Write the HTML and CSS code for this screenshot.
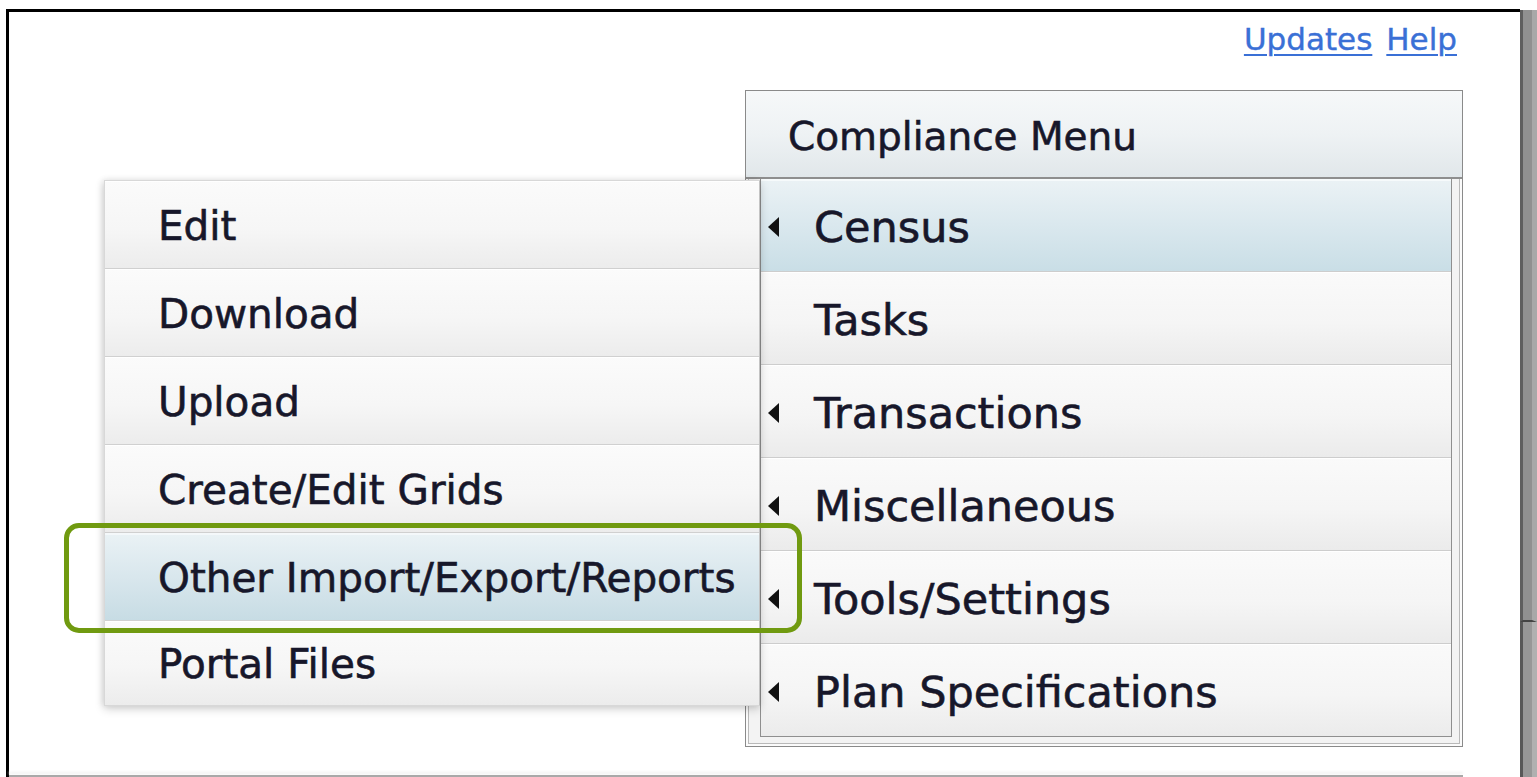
FILE: index.html
```html
<!DOCTYPE html>
<html lang="en">
<head>
<meta charset="utf-8">
<title>Compliance Menu</title>
<link rel="stylesheet" href="styles.css">
</head>
<body>
<div class="window">
  <main class="page">
    <nav class="toplinks">
      <a href="#">Updates</a>
      <a href="#">Help</a>
    </nav>

    <section class="cmenu">
      <header class="cmenu-title">Compliance Menu</header>
      <ul class="cmenu-list">
        <li class="cmenu-item is-active"><span class="arrow"></span><span class="label">Census</span></li>
        <li class="cmenu-item"><span class="noarrow"></span><span class="label">Tasks</span></li>
        <li class="cmenu-item"><span class="arrow"></span><span class="label">Transactions</span></li>
        <li class="cmenu-item"><span class="arrow"></span><span class="label">Miscellaneous</span></li>
        <li class="cmenu-item"><span class="arrow"></span><span class="label">Tools/Settings</span></li>
        <li class="cmenu-item"><span class="arrow"></span><span class="label">Plan Specifications</span></li>
      </ul>
    </section>

    <div class="page-rule"></div>

    <!-- Census submenu, opened to the left of the main menu -->
    <ul class="flyout">
      <li class="flyout-item">Edit</li>
      <li class="flyout-item">Download</li>
      <li class="flyout-item">Upload</li>
      <li class="flyout-item">Create/Edit Grids</li>
      <li class="flyout-item is-active">Other Import/Export/Reports</li>
      <li class="flyout-item">Portal Files</li>
    </ul>

    <!-- callout ring around the selected entry -->
    <div class="callout"></div>
  </main>
  <div class="scrollbar">
    <div class="scrollbar-thumb"></div>
    <div class="scrollbar-track"></div>
  </div>
</div>
</body>
</html>
```

FILE: styles.css
```css
* {
  box-sizing: border-box;
}

html,
body {
  margin: 0;
  padding: 0;
  background: #fff;
}

body {
  width: 1537px;
  height: 777px;
  overflow: hidden;
  font-family: "DejaVu Sans", Verdana, sans-serif;
  color: #17172a;
}

.window {
  display: flex;
  align-items: flex-start;
  width: 1537px;
  height: 777px;
  padding: 9px 0 0 6px;
}

/* page frame with the heavy top/left edge */
.page {
  position: relative;
  flex: 0 0 1514px;
  height: 768px;
  display: flex;
  flex-direction: column;
  border-top: 3px solid #000;
  border-left: 3px solid #000;
  background: #fff;
}

/* window scrollbar on the right edge */
.scrollbar {
  flex: 0 0 17px;
  height: 767px;
  margin-top: 1px;
  display: flex;
  flex-direction: column;
  background: #8c8c8c;
}

.scrollbar-thumb {
  height: 612px;
  background: #909090;
  border-left: 3px solid #5e5e5e;
  border-right: 5px solid #a8a8a8;
  border-bottom: 2px solid #444444;
}

.scrollbar-track {
  flex: 1;
  background: #979797;
  border-left: 3px solid #585858;
  border-right: 5px solid #b0b0b0;
}

/* top-right text links */
.toplinks {
  display: flex;
  justify-content: flex-end;
  gap: 14px;
  padding: 9px 63px 0 0;
  height: 45px;
  font-size: 31px;
  line-height: 36px;
}

.toplinks a {
  color: #3a70d6;
  text-decoration: underline;
  text-decoration-thickness: 2px;
  text-underline-offset: 4px;
  -webkit-text-stroke: 0.4px #3a70d6;
}

/* main compliance menu */
.cmenu {
  align-self: flex-end;
  width: 718px;
  height: 657px;
  margin: 33px 57px 0 0;
  border: 1px solid #8a8a8a;
  background: #f3f3f3;
  display: flex;
  flex-direction: column;
  box-shadow: inset 0 0 0 2px #fbfbfb, inset 0 0 0 3px #b9b9b9;
}

.cmenu-title {
  height: 88px;
  padding: 18px 0 0 42px;
  font-size: 39px;
  line-height: 56px;
  -webkit-text-stroke: 0.6px #17172a;
  background: linear-gradient(to bottom, #f6f8f9 0%, #eef2f4 50%, #e1e7ea 100%);
  border-bottom: 2px solid #8e8e8e;
}

.cmenu-list {
  list-style: none;
  margin: 0 10px 9px 14px;
  padding: 0;
  border: 1px solid #8f8f8f;
  border-top: 0;
  display: flex;
  flex-direction: column;
  background: #f4f4f4;
}

.cmenu-item {
  height: 93px;
  display: flex;
  align-items: center;
  padding-left: 7px;
  font-size: 43px;
  -webkit-text-stroke: 0.6px #17172a;
  background: linear-gradient(to bottom, #fafafa 0%, #f5f5f5 55%, #ebebeb 100%);
  border-bottom: 1px solid #cdcdcd;
  box-shadow: inset 0 1px 0 #fff;
}

.cmenu-item:last-child {
  height: 92px;
  border-bottom: 0;
}

.cmenu-item.is-active {
  background: linear-gradient(to bottom, #ebf2f5 0%, #dae8ee 50%, #c9dee6 100%);
  box-shadow: inset 0 2px 0 #f6fafb;
}

.cmenu-item .arrow,
.cmenu-item .noarrow {
  flex: 0 0 46px;
  height: 20px;
  margin-top: 4px;
}

.cmenu-item .arrow::before {
  content: "";
  display: block;
  width: 0;
  height: 0;
  border-top: 10px solid transparent;
  border-bottom: 10px solid transparent;
  border-right: 11px solid #111;
}

.cmenu-item .label {
  line-height: 50px;
  padding-top: 4px;
}

.page-rule {
  height: 2px;
  margin: 28px 57px 0 0;
  background: #a9a9a9;
  box-shadow: 0 -3px 3px #f0f0f0;
}

/* submenu flyout, layered over the main menu */
.flyout {
  position: absolute;
  left: 95px;
  top: 168px;
  width: 656px;
  margin: 0;
  padding: 0;
  list-style: none;
  border: 1px solid #d8d8d8;
  border-right-color: #c4c4c4;
  box-shadow: 0 3px 9px rgba(0, 0, 0, 0.18), -2px 0 6px rgba(0, 0, 0, 0.08);
  background: #f3f3f3;
}

.flyout-item {
  height: 88px;
  display: flex;
  align-items: center;
  padding: 2px 0 0 53px;
  font-size: 40.5px;
  -webkit-text-stroke: 0.6px #17172a;
  background: linear-gradient(to bottom, #fbfbfb 0%, #f6f6f6 55%, #ececec 100%);
  border-bottom: 1px solid #d0d0d0;
  box-shadow: inset 0 1px 0 #fff;
}

.flyout-item:last-child {
  height: 84px;
  border-bottom: 0;
}

.flyout-item.is-active {
  background: linear-gradient(to bottom, #eaf2f5 0%, #d9e7ed 50%, #c7dce4 100%);
  box-shadow: inset 0 2px 0 #f4f8fa;
}

.callout {
  position: absolute;
  left: 55px;
  top: 511px;
  width: 738px;
  height: 110px;
  border: 5px solid #709a10;
  border-radius: 15px;
}
```
